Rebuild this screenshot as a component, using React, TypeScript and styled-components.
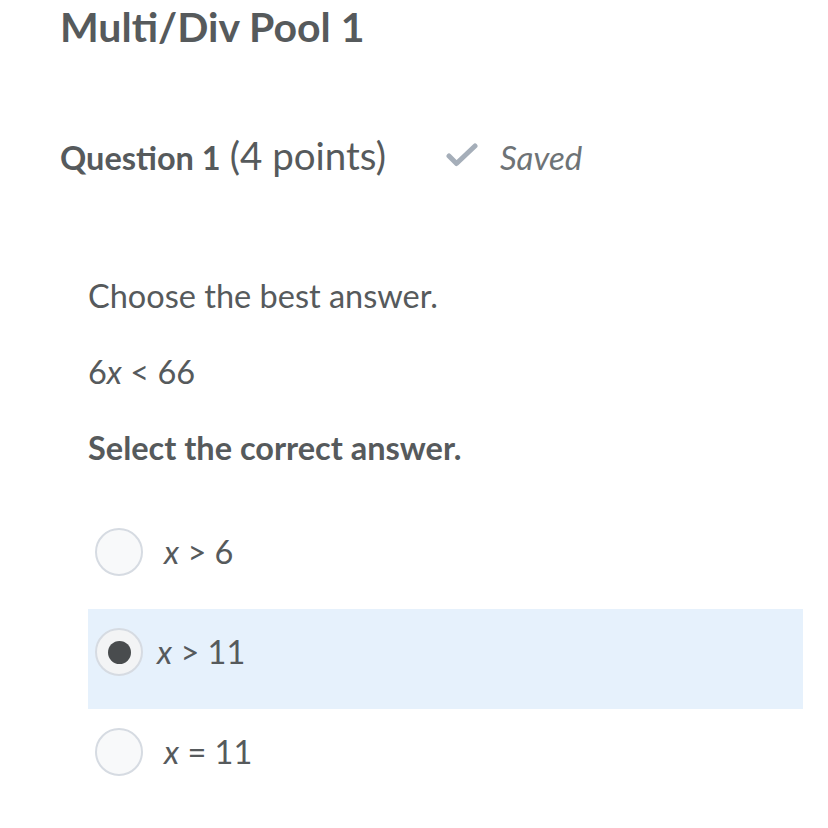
import React from "react";
import styled, { createGlobalStyle } from "styled-components";

const Global = createGlobalStyle`
  html, body { margin: 0; padding: 0; background: #ffffff; }
  body { font-family: Lato, "Noto Sans", sans-serif; color: #565a5c; }
`;

const Page = styled.div`
  width: 828px;
  height: 828px;
  overflow: hidden;
  padding: 0 25px 0 60px;
  box-sizing: border-box;
`;

const Title = styled.h1`
  margin: 0;
  padding-top: 3px;
  font-size: 41px;
  line-height: 48px;
  font-weight: 700;
  color: #565a5c;
`;

const QuestionHeader = styled.div`
  display: flex;
  align-items: baseline;
  margin-top: 80px;
  line-height: 48px;
`;

const QLabel = styled.span`
  font-size: 32.5px;
  font-weight: 700;
`;

const QPoints = styled.span`
  font-size: 38.5px;
  font-weight: 400;
  margin-left: 9px;
`;

const SavedWrap = styled.span`
  display: inline-flex;
  align-items: baseline;
  margin-left: 60px;
  font-size: 33px;
  font-style: italic;
  color: #6e7376;
  gap: 22px;
  svg {
    align-self: center;
    position: relative;
    top: -2px;
  }
`;

const Body = styled.div`
  padding-left: 28px;
  margin-top: 94px;
`;

const Para = styled.p<{ $bold?: boolean }>`
  margin: 0 0 36px;
  font-size: 32.5px;
  line-height: 40px;
  font-weight: ${(p) => (p.$bold ? 700 : 400)};
  &:last-of-type {
    margin-bottom: 0;
  }
`;

const Options = styled.div`
  margin-top: 41px;
  display: flex;
  flex-direction: column;
`;

const Option = styled.div<{ $selected?: boolean }>`
  height: 100px;
  box-sizing: border-box;
  padding: 0 0 14px 7px;
  display: flex;
  align-items: center;
  background: ${(p) => (p.$selected ? "#e6f1fc" : "transparent")};
`;

const Radio = styled.span<{ $checked?: boolean }>`
  width: 44px;
  height: 44px;
  border-radius: 50%;
  border: 2px solid #d6dbe2;
  background: ${(p) => (p.$checked ? "#f3f4f5" : "#f8f9fa")};
  display: inline-flex;
  align-items: center;
  justify-content: center;
  flex-shrink: 0;
  &::after {
    content: "";
    display: ${(p) => (p.$checked ? "block" : "none")};
    width: 23px;
    height: 23px;
    border-radius: 50%;
    background: #494c4e;
  }
`;

const OptText = styled.span<{ $offset: number }>`
  margin-left: ${(p) => p.$offset}px;
  font-size: 32.5px;
  line-height: 40px;
`;

const Var = styled.i`
  font-style: italic;
`;

function Check() {
  return (
    <svg width="32" height="24" viewBox="0 0 32 24">
      <path d="M3 13 L10.5 20.5 L29 3" fill="none" stroke="#a5aeb9" strokeWidth="5" strokeLinecap="round" strokeLinejoin="round" />
    </svg>
  );
}

export default function App() {
  const options = [
    { label: <><Var>x</Var> &gt; 6</>, checked: false, offset: 21 },
    { label: <><Var>x</Var> &gt; 11</>, checked: true, offset: 14 },
    { label: <><Var>x</Var> = 11</>, checked: false, offset: 21 },
  ];
  return (
    <>
      <Global />
      <Page>
        <Title>Multi/Div Pool 1</Title>
        <QuestionHeader>
          <QLabel>Question 1</QLabel>
          <QPoints>(4 points)</QPoints>
          <SavedWrap>
            <Check />
            Saved
          </SavedWrap>
        </QuestionHeader>
        <Body>
          <Para>Choose the best answer.</Para>
          <Para>
            6<Var>x</Var> &lt; 66
          </Para>
          <Para $bold>Select the correct answer.</Para>
          <Options>
            {options.map((o, i) => (
              <Option key={i} $selected={o.checked}>
                <Radio $checked={o.checked} />
                <OptText $offset={o.offset}>{o.label}</OptText>
              </Option>
            ))}
          </Options>
        </Body>
      </Page>
    </>
  );
}
